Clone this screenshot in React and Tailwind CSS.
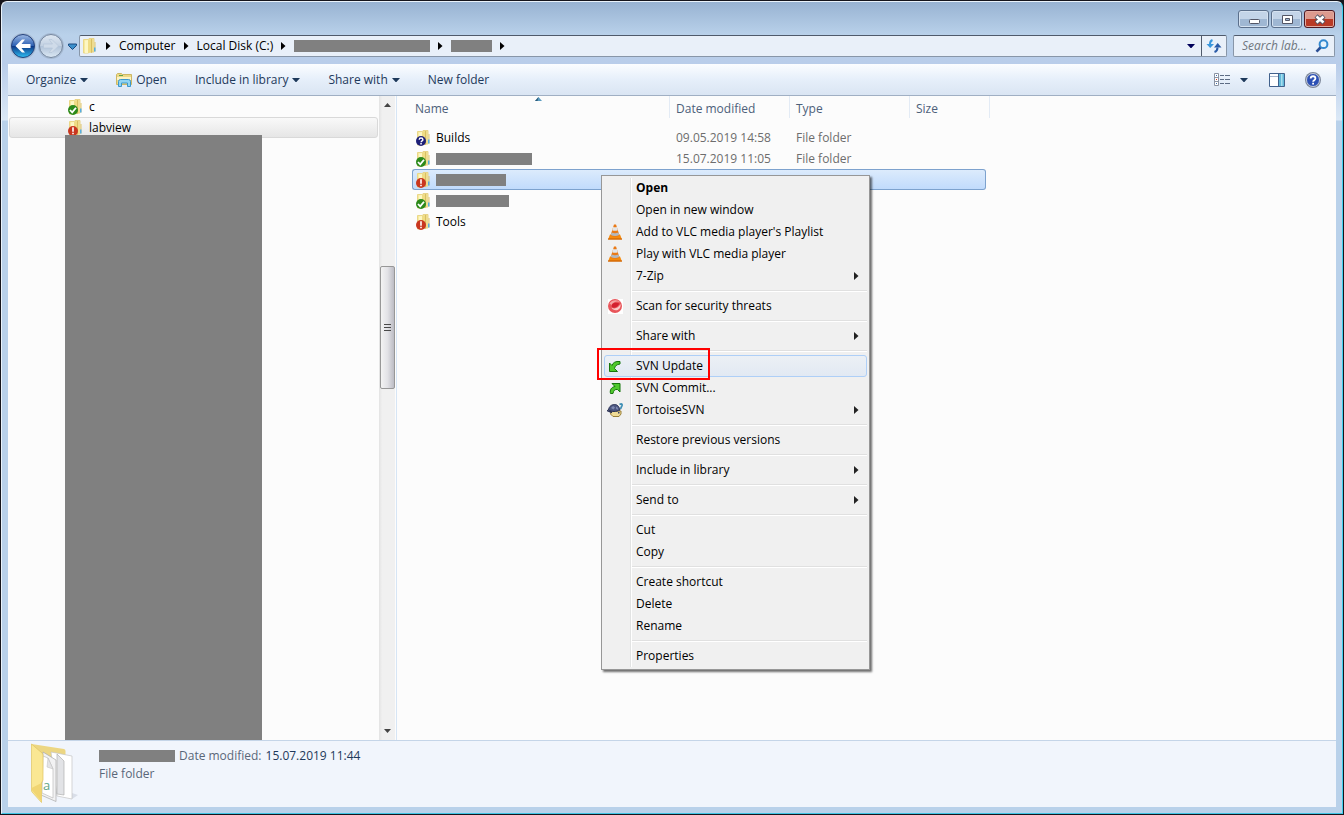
import React from 'react';
import clsx from 'clsx';

const TOOLBAR_ITEMS = [
  { label: 'Organize', arrow: true },
  { label: 'Open', icon: true },
  { label: 'Include in library', arrow: true },
  { label: 'Share with', arrow: true },
  { label: 'New folder' },
];

const FILES = [
  { name: 'Builds', status: 'unknown', date: '09.05.2019 14:58', type: 'File folder' },
  { hidden: 'w-24', status: 'ok', date: '15.07.2019 11:05', type: 'File folder' },
  { hidden: 'w-[70px]', status: 'modified', selected: true },
  { hidden: 'w-[73px]', status: 'ok' },
  { name: 'Tools', status: 'modified' },
];

const MENU_GROUPS = [
  [
    { label: 'Open', bold: true },
    { label: 'Open in new window' },
    { label: "Add to VLC media player's Playlist", icon: 'vlc' },
    { label: 'Play with VLC media player', icon: 'vlc' },
    { label: '7-Zip', submenu: true },
  ],
  [{ label: 'Scan for security threats', icon: 'scan' }],
  [{ label: 'Share with', submenu: true }],
  [
    { label: 'SVN Update', icon: 'update', active: true },
    { label: 'SVN Commit...', icon: 'commit' },
    { label: 'TortoiseSVN', icon: 'tortoise', submenu: true },
  ],
  [{ label: 'Restore previous versions' }],
  [{ label: 'Include in library', submenu: true }],
  [{ label: 'Send to', submenu: true }],
  [{ label: 'Cut' }, { label: 'Copy' }],
  [{ label: 'Create shortcut' }, { label: 'Delete' }, { label: 'Rename' }],
  [{ label: 'Properties' }],
];

const Redacted = ({ className }) => <span className={clsx('block shrink-0 bg-[#808080]', className)} />;

const DownArrow = ({ className = 'text-[#1e395b]' }) => (
  <svg className={clsx('h-1 w-2 shrink-0', className)} viewBox="0 0 8 4" fill="currentColor">
    <path d="M0 0h8L4 4.500z" />
  </svg>
);

const RightArrow = ({ className = 'text-black' }) => (
  <svg className={clsx('h-2 w-[5px] shrink-0', className)} viewBox="0 0 5 8" fill="currentColor">
    <path d="M0 0v8l4.500-4z" />
  </svg>
);

const SortArrow = () => (
  <svg className="absolute top-[1px] left-[123px] h-1 w-[7px]" viewBox="0 0 7 4">
    <path d="M0 4h7L3.500 0z" fill="#5a9cc0" />
    <path d="M0 4h2.500L3.500 0z" fill="#2c5a78" />
  </svg>
);

const FolderShape = () => (
  <>
    <path d="M2.500 1.500h5V15h-5z" fill="#f7eaa0" stroke="#ebd888" />
    <path d="M8 .5h5V14H8z" fill="#f4e49a" stroke="#e8d488" />
    <path d="M4 2.500 7 2v13H4z" fill="#fdf7c4" />
    <path d="M7 2.500 10 1v13.500l-3 .5z" fill="#efdc85" />
    <path d="M10 1h1.200v13.500L10 15z" fill="#d8bf62" />
    <path d="M13.500 4h1v9.500h-1z" fill="#dfc66f" />
    <path d="M13 9.500h1.500v4H13z" fill="#54aee6" />
  </>
);

const FolderIcon = () => (
  <svg className="size-4 shrink-0" viewBox="0 0 16 16">
    <FolderShape />
  </svg>
);

const SvnFolderIcon = ({ status }) => (
  <svg className="size-4 shrink-0" viewBox="0 0 16 16">
    <FolderShape />
    {status === 'ok' && (
      <>
        <circle cx="6" cy="11" r="5" fill="#2c8a1b" />
        <path d="m3 11 2.200 2.300L9 8.700" fill="none" stroke="#fff" strokeWidth="1.800" />
      </>
    )}
    {status === 'modified' && (
      <>
        <circle cx="6" cy="11" r="5" fill="#c9371f" />
        <path d="M5.200 7.300h1.600v4.500H5.200zM5.200 12.800h1.600v1.500H5.200z" fill="#fff" />
      </>
    )}
    {status === 'unknown' && (
      <>
        <circle cx="6" cy="11" r="5" fill="#1d1f78" />
        <path d="M4.200 9.700c0-2.200 3.700-2.200 3.700 0 0 1.300-1.800 1.200-1.800 2.600" fill="none" stroke="#fff" strokeWidth="1.400" />
        <path d="M5.300 13h1.500v1.400H5.300z" fill="#fff" />
      </>
    )}
  </svg>
);

const OpenFolderIcon = () => (
  <svg className="size-4 shrink-0" viewBox="0 0 16 16">
    <path d="M.5 12.500v-10l1-1h4l1 1h9v10z" fill="#ecd986" stroke="#cdb765" />
    <path d="M3 3.500h4" stroke="#5da04a" />
    <path d="M1 5h14v3H1z" fill="#fbf3c3" />
    <path d="M2.500 14.500V9.500q0-2 2-2h8q2 0 2 2v5h-3v-3.500h-6v3.500z" fill="#8fd4f3" stroke="#3a97cc" />
  </svg>
);

const ConeIcon = () => (
  <svg className="size-4" viewBox="0 0 16 16">
    <path d="M3 10.500h10l2 5H1z" fill="#f58a0c" />
    <path d="M1 14.500h14v1H1z" fill="#c45a04" />
    <path d="M7 .5h2l3.500 11q-4.500 2.500-9 0z" fill="#ea7a16" />
    <path d="m6.200 3-1 3.200q2.800 1 5.600 0l-1-3.200q-1.800.6-3.600 0z" fill="#e3e6e9" />
    <path d="m4.500 8.500-.7 2.500q4.200 2.200 8.400 0l-.7-2.500q-3.500 1.400-7 0z" fill="#b3b8be" />
  </svg>
);

const ScanIcon = () => (
  <svg className="size-4" viewBox="0 0 16 16">
    <rect x="1" y="1" width="15" height="15" fill="#fff" />
    <circle cx="8" cy="8" r="7" fill="#e8555a" />
    <path d="M2.500 5.500C5 1.500 11 1.500 13.500 4.500 10 2.500 6.500 4 4.500 7z" fill="#f5a3a2" />
    <path d="M5 6.500C6 4.500 10 4.500 12.500 5.500 10.500 9.500 6.500 10.500 4.800 9z" fill="#d3202e" />
    <path d="M4.500 9.500c3 2 7 .5 9-3.500.6 4-2 6.300-4.500 6.300-2 0-4-1-4.500-2.800z" fill="#fbc9c6" />
  </svg>
);

const UpdateIcon = () => (
  <svg className="size-4" viewBox="0 0 16 16">
    <path d="M2.500 5v8.500h8L7.500 10.500C8 8 9.500 6.500 13 6V3.500C8.500 3 6 4.500 5 7.500z" fill="#4fc92c" stroke="#17760c" />
  </svg>
);

const CommitIcon = () => (
  <svg className="size-4" viewBox="0 0 16 16">
    <path d="M5 3.500h8V12l-2.500-2.500C8 9 6.500 10.500 6 13.500H3.500C2.500 10 4.500 7 8 6.500z" fill="#4fc92c" stroke="#17760c" />
  </svg>
);

const TortoiseIcon = () => (
  <svg className="size-4" viewBox="0 0 16 16">
    <path d="M4 9h10v3L12 14.500H6L3.500 12z" fill="#f0dc96" stroke="#9a8038" />
    <path d="M1.500 8c.5-4 3.500-5.500 6-5.500S12 4 13 8c-4 2-8 2-11.500 0z" fill="#4c5680" stroke="#2a3154" />
    <path d="m4 6 2-2 2 1.500L6.500 7.500zM9 4.500l2 1.500-.5 2L9 6.500z" fill="#7f8ab2" />
    <path d="m0 8.500 5 2" stroke="#2a3154" strokeWidth="1.500" />
    <path d="M12.500 2.500q3-1.500 2.500 1l-1.500 3.500" fill="none" stroke="#3f8fb5" strokeWidth="1.800" />
    <path d="M11 10h1.500v1.500H11z" fill="#3a4268" />
  </svg>
);

const MENU_ICONS = {
  vlc: ConeIcon,
  scan: ScanIcon,
  update: UpdateIcon,
  commit: CommitIcon,
  tortoise: TortoiseIcon,
};

const TitleBar = () => (
  <div className="flex h-[33px] items-start justify-end gap-[2px] pt-2">
    <button aria-label="Minimize" className="flex h-[18px] w-[31px] items-center justify-center rounded-[3px] border border-[#5b6f8b] bg-linear-to-b from-[#c3d4e8] from-50% to-[#9fb7d3] to-50% shadow-[inset_0_0_0_1px_#d5e2f1]">
      <svg className="h-[13px] w-4" viewBox="0 0 16 13">
        <rect x="3.500" y="6.500" width="10" height="4" rx="1" fill="#fff" stroke="#535666" />
      </svg>
    </button>
    <button aria-label="Maximize" className="flex h-[18px] w-[31px] items-center justify-center rounded-[3px] border border-[#5b6f8b] bg-linear-to-b from-[#c3d4e8] from-50% to-[#9fb7d3] to-50% shadow-[inset_0_0_0_1px_#d5e2f1]">
      <svg className="h-[13px] w-4" viewBox="0 0 16 13">
        <path d="M3.500 2.500h10v8h-10zM6.500 5.500v2h4v-2z" fill="#fff" fillRule="evenodd" stroke="#535666" />
      </svg>
    </button>
    <button aria-label="Close" className="flex h-[18px] w-[31px] items-center justify-center rounded-[3px] border border-[#4f1923] bg-linear-to-b from-[#dd9a8e] from-50% to-[#b93a26] to-50% shadow-[inset_0_0_0_1px_#e3aca2]">
      <svg className="h-[13px] w-4" viewBox="0 0 16 13">
        <path d="m4 3 8 7m0-7-8 7" stroke="#535666" strokeWidth="4.500" />
        <path d="m4.500 3.500 7 6m0-6-7 6" stroke="#fff" strokeWidth="2.600" />
      </svg>
    </button>
  </div>
);

const NavButtons = () => (
  <div className="flex items-center">
    <button aria-label="Back">
      <svg className="size-7" viewBox="0 0 28 28">
        <defs>
          <linearGradient id="back" x2="0" y2="1">
            <stop offset="0" stopColor="#9db9e4" />
            <stop offset=".48" stopColor="#2f62b4" />
            <stop offset=".5" stopColor="#0c3484" />
            <stop offset="1" stopColor="#2fc0f4" />
          </linearGradient>
        </defs>
        <circle cx="14" cy="14" r="13" fill="#a6bad3" />
        <circle cx="14" cy="14" r="11.500" fill="url(#back)" stroke="#25427c" />
        <path d="m6.500 14 6.500-6.500h3L12.500 12h9v4h-9l3.500 4.500h-3z" fill="#fff" />
      </svg>
    </button>
    <button aria-label="Forward">
      <svg className="size-7" viewBox="0 0 28 28">
        <defs>
          <linearGradient id="forward" x2="0" y2="1">
            <stop offset="0" stopColor="#dfe8f2" />
            <stop offset=".48" stopColor="#c3d1e2" />
            <stop offset=".5" stopColor="#b0c2d8" />
            <stop offset="1" stopColor="#dbe8f4" />
          </linearGradient>
        </defs>
        <circle cx="14" cy="14" r="13" fill="#a6bad3" />
        <circle cx="14" cy="14" r="11.500" fill="url(#forward)" stroke="#75879f" />
        <path d="M21.500 14 15 7.500h-3l3.500 4.500h-9v4h9L12 20.500h3z" fill="#cfdbe9" stroke="#b4c4d7" strokeWidth=".6" />
      </svg>
    </button>
    <button aria-label="Recent pages" className="flex w-[14px] justify-center">
      <svg className="h-[7px] w-[9px]" viewBox="0 0 9 7">
        <path d="M.5 1h8v1.500l-4 4-4-4z" fill="#3b8fcb" stroke="#1a4a80" />
      </svg>
    </button>
  </div>
);

const AddressBar = () => (
  <div className="flex h-[22px] items-center">
    <NavButtons />
    <div className="flex h-[22px] flex-1 items-center rounded-xs border border-[#8896a8] border-t-[#4f5a6b] bg-[#e9f0f9] pl-px">
      <FolderIcon />
      <div className="flex flex-1 items-center pl-[9px]">
        <RightArrow />
        <button className="px-2">Computer</button>
        <RightArrow />
        <button className="px-2">Local Disk (C:)</button>
        <RightArrow />
        <Redacted className="mx-2 h-3 w-[136px]" />
        <RightArrow />
        <Redacted className="mx-2 h-3 w-[41px]" />
        <RightArrow />
      </div>
      <button aria-label="Previous locations" className="flex h-full w-[21px] items-center justify-center">
        <DownArrow className="text-[#00005a]" />
      </button>
      <button aria-label="Refresh" className="flex h-full w-[25px] items-center justify-center border-l border-[#4f5a6b]">
        <svg className="size-4" viewBox="0 0 16 16">
          <path d="M6.500 2Q4 3 4 6" fill="none" stroke="#3a97dc" strokeWidth="2" />
          <path d="M.5 6H8L4.200 10z" fill="#3a97dc" />
          <path d="M8.500 14q3-1 3-4.500" fill="none" stroke="#2a5ba8" strokeWidth="2" />
          <path d="M8 9.500h7.500L11.700 5z" fill="#2a5ba8" />
        </svg>
      </button>
    </div>
    <div className="ml-[6px] flex h-[22px] w-[102px] items-center rounded-xs border border-[#8896a8] border-t-[#4f5a6b] bg-[#e9f0f9] pl-2 pr-[5px]">
      <input
        type="text"
        aria-label="Search"
        placeholder="Search lab..."
        className="min-w-0 flex-1 bg-transparent italic outline-none placeholder:text-[#6f767e]"
      />
      <svg className="size-[14px] shrink-0" viewBox="0 0 14 14">
        <circle cx="8.500" cy="5.200" r="3.900" fill="#e7f3fc" stroke="#3489cf" strokeWidth="2" />
        <path d="m5.500 8.500-4 4.200" stroke="#2b4f94" strokeWidth="2.600" />
      </svg>
    </div>
  </div>
);

const Toolbar = () => (
  <div className="flex h-8 items-center border-b border-[#a0afc3] bg-linear-to-b from-[#fbfdff] via-[#e6effa] via-50% to-[#dae5f3] pl-[18px] pr-[15px] text-[#1e395b]">
    <div className="flex flex-1 items-center gap-7">
      {TOOLBAR_ITEMS.map((item) => (
        <button key={item.label} className="flex items-center gap-1 whitespace-nowrap">
          {item.icon && <OpenFolderIcon />}
          {item.label}
          {item.arrow && <DownArrow />}
        </button>
      ))}
    </div>
    <div className="flex items-center">
      <button aria-label="Change your view">
        <svg className="size-4" viewBox="0 0 16 16">
          <path d="M.5 1.500h4v12h-4zM.5 5.500h4M.5 9.500h4" fill="#fff" stroke="#8a93a3" />
          <path d="M2 3h1v1H2zM2 11h1v1H2z" fill="#3a70b0" />
          <path d="M2 7h1v1H2z" fill="#d03a1c" />
          <path d="M6 3.500h4m1 0h5M6 7.500h4m1 0h5M6 11.500h4m1 0h5" stroke="#5d6c84" />
        </svg>
      </button>
      <button aria-label="More options" className="ml-[10px] flex items-center">
        <DownArrow />
      </button>
      <button aria-label="Show the preview pane" className="ml-[21px]">
        <svg className="size-4" viewBox="0 0 16 16">
          <path d="M.5 1.500h15v13H.5z" fill="#fff" stroke="#41618c" />
          <path d="M1 4.500h9" stroke="#a6b8ce" />
          <path d="M10 2h5v12h-5z" fill="#63b9d9" />
          <path d="M12 2h1.500v12H12z" fill="#a8deef" />
          <path d="M9.500 2v12" stroke="#41618c" />
        </svg>
      </button>
      <button aria-label="Get help" className="ml-5">
        <svg className="size-4" viewBox="0 0 16 16">
          <circle cx="8" cy="8" r="8" fill="#7d8799" />
          <circle cx="8" cy="8" r="6.500" fill="#2c50b4" stroke="#c3cbdc" />
          <path d="M5.700 6.500c0-3 4.700-3 4.700 0 0 1.700-2.300 1.600-2.300 3.200" fill="none" stroke="#fff" strokeWidth="1.800" />
          <path d="M7.200 10.700H9v1.700H7.200z" fill="#fff" />
        </svg>
      </button>
    </div>
  </div>
);

const FolderTree = () => (
  <nav className="flex w-[371px] shrink-0 flex-col">
    <button className="flex h-[21px] items-center gap-[6px] pl-[59px]">
      <SvnFolderIcon status="ok" />
      c
    </button>
    <button className="mr-px ml-px flex h-[21px] items-center gap-[6px] rounded-[3px] border border-[#d9d9d9] bg-linear-to-b from-[#f9f9f9] to-[#e6e6e6] pl-[57px]">
      <SvnFolderIcon status="modified" />
      labview
    </button>
    <Redacted className="z-10 -mt-[3px] ml-[57px] w-[197px] flex-1" />
  </nav>
);

const Scrollbar = () => (
  <div className="flex w-4 shrink-0 flex-col items-center bg-linear-to-r from-[#e3e3e3] via-[#f0f0f0] via-20% to-[#f0f0f0] pt-[7px] pb-[7px]">
    <svg className="h-1 w-[7px]" viewBox="0 0 7 4">
      <path d="M0 4h7L3.500 0z" fill="#444" />
    </svg>
    <div className="mt-[159px] flex h-[123px] w-[15px] flex-col items-center justify-center gap-[2px] rounded-xs border border-[#979797] bg-linear-to-r from-[#f3f3f3] via-[#e2e2e6] to-[#bcbcc4]">
      <span className="h-px w-[7px] bg-[#4a4a4a]" />
      <span className="h-px w-[7px] bg-[#4a4a4a]" />
      <span className="h-px w-[7px] bg-[#4a4a4a]" />
    </div>
    <svg className="mt-auto h-1 w-[7px]" viewBox="0 0 7 4">
      <path d="M0 0h7L3.500 4z" fill="#444" />
    </svg>
  </div>
);

const HeaderCell = ({ children, className, sorted, ...props }) => (
  <th className="relative h-[25px] p-0 text-left align-top font-normal text-[#4c607a]" {...props}>
    <div className={clsx('flex h-[22px] items-end border-r border-[#e3ebf5] leading-[18px]', className)}>{children}</div>
    {sorted && <SortArrow />}
  </th>
);

const FileRow = ({ file }) => {
  const cell = clsx(
    'h-[21px] p-0 text-[#6d6d6d]',
    file.selected && 'border-y border-[#7da2ce] bg-linear-to-b from-[#dcebfc] to-[#c1dbfc]'
  );

  return (
    <tr>
      <td className={clsx(cell, file.selected && 'rounded-l-[3px] border-l')}>
        <div className={clsx('flex items-center gap-[5px] text-black', file.selected ? 'pl-[2px]' : 'pl-[3px]')}>
          <SvnFolderIcon status={file.status} />
          {file.name || <Redacted className={clsx('h-3', file.hidden)} />}
        </div>
      </td>
      <td className={clsx(cell, 'pl-[6px]')}>{file.date}</td>
      <td className={clsx(cell, 'pl-[6px]')}>{file.type}</td>
      <td className={clsx(cell, file.selected && 'rounded-r-[3px] border-r')} />
      <td className="p-0" />
    </tr>
  );
};

const FileList = () => (
  <main className="ml-px flex-1 border-l border-[#d6e5f5] pl-[15px]">
    <table className="w-[578px] table-fixed border-separate border-spacing-0">
      <colgroup>
        <col className="w-[258px]" />
        <col className="w-[120px]" />
        <col className="w-[120px]" />
        <col className="w-[76px]" />
        <col className="w-[4px]" />
      </colgroup>
      <thead>
        <tr>
          <HeaderCell className="pl-[3px]" sorted>Name</HeaderCell>
          <HeaderCell className="pl-[6px]">Date modified</HeaderCell>
          <HeaderCell className="pl-[6px]">Type</HeaderCell>
          <HeaderCell className="pl-[6px]" colSpan={2}>Size</HeaderCell>
        </tr>
      </thead>
      <tbody>
        <tr aria-hidden="true">
          <td className="h-[6px] p-0" />
        </tr>
        {FILES.map((file, i) => (
          <FileRow key={i} file={file} />
        ))}
      </tbody>
    </table>
  </main>
);

const DetailsPane = () => (
  <footer className="flex h-[67px] items-start border-t border-[#c5d5e8] bg-[#f1f5fc] pl-[21px] text-[#5a6779]">
    <svg className="mt-[2px] h-[62px] w-[50px] shrink-0" viewBox="0 0 50 62">
      <path d="M2.500 1 35 6q1.500.5 1.500 2v34L12 50z" fill="#ecd682" />
      <path d="m43 50 6 2-6 4z" fill="#d9dee8" />
      <path d="m22 9 21 4v43l-15-3z" fill="#fff" stroke="#c4c4c4" strokeWidth=".7" />
      <path d="m28 11 7 7v34l-7-1z" fill="#e2e3e6" stroke="#b0b0b0" strokeWidth=".7" />
      <path d="m14 9 13 8v41.500L12 52z" fill="#f2f2f3" stroke="#a9a9a9" strokeWidth=".7" />
      <path d="m14 13 5 2 5 11v29l-11-5z" fill="#fff" stroke="#bdbdbd" strokeWidth=".7" />
      <path d="m19 15-1 9 6 2z" fill="#e4e4e6" stroke="#bdbdbd" strokeWidth=".5" />
      <text x="14" y="47" fontSize="13" fill="#5fa583">a</text>
      <path d="M2.500 1 13 10q1 1 1 2v25l-1.500 3v19.500L3 49q-.5-.5-.5-2z" fill="#fae793" stroke="#e0c461" strokeWidth=".7" />
      <path d="M2.500 45q0 2 1.500 3.500l8.500 10V40z" fill="#f1d572" />
    </svg>
    <div className="pt-[6px] pl-5 leading-[18px]">
      <div className="flex items-center">
        <Redacted className="mr-1 h-3 w-[76px]" />
        Date modified:
        <span className="pl-1 text-[#1e395b]">15.07.2019 11:44</span>
      </div>
      <div>File folder</div>
    </div>
  </footer>
);

const MenuItem = ({ item }) => {
  const Icon = MENU_ICONS[item.icon];

  return (
    <button
      role="menuitem"
      className={clsx(
        'relative flex h-[22px] w-full items-center rounded-[3px] border pr-[7px] pl-[2px] text-left whitespace-nowrap',
        item.active ? 'border-[#aecff7] bg-linear-to-b from-[#ecf0f5] to-[#e2e9f3]' : 'border-transparent',
        item.bold && 'font-bold'
      )}
    >
      <span className="w-[29px] shrink-0">{Icon && <Icon />}</span>
      <span className="flex-1">{item.label}</span>
      {item.submenu && <RightArrow className="text-[#222]" />}
      {item.active && <span className="absolute -top-2 -left-2 h-8 w-[113px] border-2 border-[#f00]" />}
    </button>
  );
};

const ContextMenu = () => (
  <div
    role="menu"
    className="absolute top-[175px] left-[601px] z-20 w-[269px] border border-[#979797] bg-[#f0f0f0] px-[2px] pt-px pb-[2px] shadow-[2px_2px_2px_#00000090]"
  >
    <span className="absolute inset-y-[2px] left-[28px] w-[2px] border-l border-[#e2e3e3] bg-white" />
    {MENU_GROUPS.map((group, i) => (
      <div key={i} role="group">
        {i > 0 && <div className="my-[3px] ml-7 h-[2px] border-t border-[#e0e0e0] bg-white" />}
        {group.map((item) => (
          <MenuItem key={item.label} item={item} />
        ))}
      </div>
    ))}
  </div>
);

const App = () => (
  <div className="relative flex min-h-screen flex-col bg-[#15151c] p-px font-['Open_Sans','Noto_Sans',sans-serif] text-xs text-black">
    <div className="flex flex-1 flex-col rounded-t-md border border-[#eaf3fb] border-r-[#3fd0ee] border-b-[#3fc4e4] bg-[linear-gradient(to_bottom,#98b3d2_0px,#b9d1ea_33px,#b9cdea_62px,#dbe8f6_118px,#b9d1ea_119px)] px-[6px] pb-[6px]">
      {/* Window chrome */}
      <div className="pr-px pl-px">
        <TitleBar />
        <AddressBar />
      </div>

      <div className="mt-[7px] flex flex-1 flex-col bg-[#fcfcfc]">
        <Toolbar />
        <div className="flex flex-1">
          <FolderTree />
          <Scrollbar />
          <FileList />
        </div>
        <DetailsPane />
      </div>
    </div>
    <ContextMenu />
  </div>
);

export default App;
